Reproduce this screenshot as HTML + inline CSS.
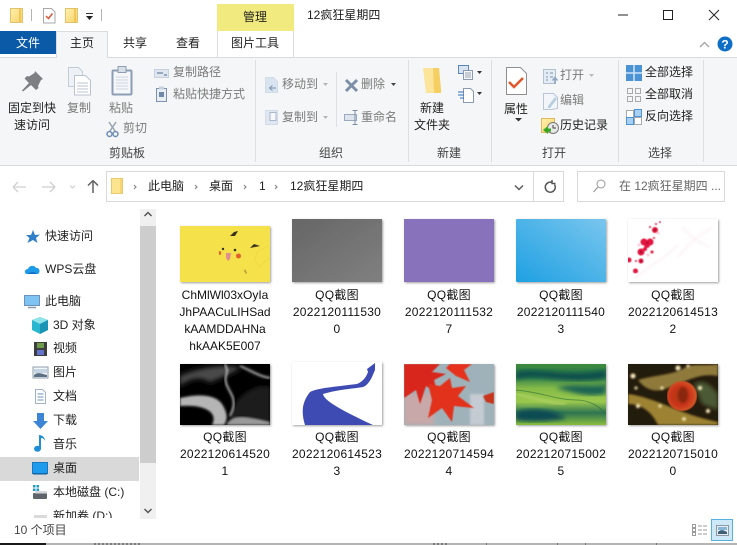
<!DOCTYPE html>
<html lang="zh-CN">
<head>
<meta charset="utf-8">
<title>12疯狂星期四</title>
<style>
html,body{margin:0;padding:0;background:#fff}
body{width:737px;height:545px;position:relative;overflow:hidden;font-family:"Liberation Sans","Noto Sans CJK SC",sans-serif;font-size:12px;color:#222}
svg.g{position:absolute;left:0;top:0}
.t{position:absolute;white-space:nowrap;line-height:16px;height:16px}
.d{color:#7b7b7b}
.c{position:absolute;width:112px;text-align:center;line-height:17px;color:#111;letter-spacing:.25px;word-break:break-all}
.clip{position:absolute;left:0;top:500px;width:139px;height:18px;overflow:hidden}
</style>
</head>
<body>
<svg class="g" width="737" height="545" viewBox="0 0 737 545" xmlns="http://www.w3.org/2000/svg">
<defs>
<linearGradient id="fo" x1="0" y1="0" x2="1" y2="1"><stop offset="0" stop-color="#fff0b0"/><stop offset="1" stop-color="#f7d266"/></linearGradient>
<linearGradient id="gray" x1="0" y1="0" x2="1" y2="1"><stop offset="0" stop-color="#666"/><stop offset="1" stop-color="#808080"/></linearGradient>
<linearGradient id="blue" x1="0" y1="1" x2="1" y2="0"><stop offset="0" stop-color="#1fa0e2"/><stop offset="1" stop-color="#79c6ee"/></linearGradient>
<linearGradient id="green" x1="0" y1="0" x2="0" y2="1"><stop offset="0" stop-color="#3d8a3c"/><stop offset=".2" stop-color="#2a7a4c"/><stop offset=".4" stop-color="#86bb48"/><stop offset=".62" stop-color="#9ac84e"/><stop offset=".8" stop-color="#2d7352"/><stop offset="1" stop-color="#8abd3e"/></linearGradient>
<radialGradient id="orn" cx=".45" cy=".5" r=".6"><stop offset="0" stop-color="#a83415"/><stop offset=".55" stop-color="#c9341a"/><stop offset="1" stop-color="#d9652c"/></radialGradient>
<filter id="sh" x="-5%" y="-5%" width="112%" height="112%"><feDropShadow dx="1" dy="1" stdDeviation="1" flood-color="#000" flood-opacity=".38"/></filter>
<filter id="s" x="0" y="0" width="100%" height="100%"><feGaussianBlur stdDeviation=".45"/></filter>
<filter id="b1"><feGaussianBlur stdDeviation="1"/></filter>
<filter id="b2"><feGaussianBlur stdDeviation="2.2"/></filter>
<clipPath id="c63"><rect width="90" height="63"/></clipPath>
<clipPath id="c61"><rect width="90" height="61"/></clipPath>
</defs>

<!-- title bar -->
<rect x="217" y="4" width="77" height="27" fill="#f1ea7f"/>
<path d="M217.500 31V57M293.500 31V57" stroke="#dcdcdc" fill="none"/>
<path d="M10.500 8.500h12v14h-12z" fill="url(#fo)" stroke="#e3c26a"/><path d="M20 9v13" stroke="#eec65c" stroke-width="2"/>
<path d="M31.500 9v12M101.500 9v12" stroke="#b5b5b5"/>
<path d="M43.500 8.500h8l3.500 3.500v11h-11.500z" fill="#fff" stroke="#a9a9a9"/><path d="M46 16l2.500 2.500 4-5" stroke="#d9583a" stroke-width="1.500" fill="none"/>
<path d="M65.500 8.500h12v14h-12z" fill="url(#fo)" stroke="#e3c26a"/><path d="M75 9v13" stroke="#eec65c" stroke-width="2"/>
<path d="M86 13.500h7" stroke="#333"/><path d="M86 16h7l-3.500 4z" fill="#222"/>
<path d="M618 15h10" stroke="#222" stroke-width="1"/>
<rect x="663.500" y="10.500" width="9" height="9" fill="none" stroke="#222"/>
<path d="M709 10l10 10M719 10l-10 10" stroke="#222"/>
<path d="M700 47l4.500-4.500 4.500 4.500" fill="none" stroke="#aaa" stroke-width="1.500"/>
<circle cx="725" cy="44" r="7.500" fill="#0f6fc6"/>
<text x="725" y="48.500" text-anchor="middle" font-family="Liberation Sans" font-weight="bold" font-size="12" fill="#fff">?</text>

<!-- tabs and ribbon -->
<rect x="0" y="31" width="56" height="23" fill="#0a5aa8"/>
<rect x="0" y="58" width="737" height="107" fill="#f5f6f7"/>
<path d="M0 57.500H737" stroke="#dadbdc"/><path d="M0 165.500H737" stroke="#dadbdc"/>
<path d="M56.500 58V31.500H107.500V58" fill="#f5f6f7" stroke="#dadbdc"/>
<rect x="57" y="56" width="50" height="3" fill="#f5f6f7"/>
<path d="M255.500 60v102M408.500 60v102M491.500 60v102M618.500 60v102M703.500 60v102" stroke="#dcdedf"/>
<path d="M336.500 72v55" stroke="#dcdedf"/>

<!-- pin -->
<path d="M35 71L43 79L41 80L38 86L38.500 88L36 90L31 85L23 91.500L22 90.500L29 83L24.500 78.500L27 76L29 76.500L34.500 73z" fill="#7d7f82"/>
<!-- copy -->
<path d="M68.500 67.500h10l4 4v15h-14z" fill="#eef2f7" stroke="#c3cbd6"/>
<path d="M74.500 75.500h11l5 5v14.500h-16z" fill="#fff" stroke="#b9c3d0"/>
<path d="M77 83h11M77 86h11M77 89h11M77 92h11" stroke="#b8c4d2"/>
<!-- paste -->
<rect x="112.500" y="70.500" width="19" height="24" rx="1" fill="#f4f6f9" stroke="#8d9eb4" stroke-width="2"/>
<rect x="118" y="66.500" width="8" height="6" fill="#d8dee6" stroke="#8d9eb4"/>
<path d="M116 77h12M116 80h12M116 83h12M116 86h12M116 89h12" stroke="#ccd5df"/>
<!-- scissors -->
<path d="M116 122l-6 9M109 122l6 9" stroke="#9aa4b1" stroke-width="1.500" fill="none"/>
<circle cx="109.500" cy="134" r="2.500" fill="none" stroke="#6f8eb3" stroke-width="1.500"/><circle cx="115.500" cy="134" r="2.500" fill="none" stroke="#6f8eb3" stroke-width="1.500"/>
<!-- path / shortcut icons -->
<rect x="154.500" y="69.500" width="14" height="8" fill="#dfe6f0" stroke="#c7d1de"/><path d="M157 73h6M164 75h3" stroke="#7f93ad" stroke-width="1.500"/>
<rect x="156.500" y="88.500" width="10" height="13" fill="#e9eef4" stroke="#7f93ad"/><rect x="159" y="86.500" width="5" height="3" fill="#c7d1de"/><path d="M159 92h5v5h-5z" fill="#6f88a8"/>
<!-- move to / copy to -->
<path d="M265.500 77.500h8l4 4v11h-12z" fill="#d9e4f1" stroke="#d2dbe6"/><path d="M276 88h-6m2.500-2.500l-3 2.500 3 2.500" stroke="#7f93ad" fill="none"/>
<rect x="265.500" y="110.500" width="12" height="14" fill="#dee7f2" stroke="#d2dbe6"/><rect x="270" y="112.500" width="6" height="8" fill="#f6f8fb" stroke="#a8b7c9"/>
<path d="M323 83l2.500 3 2.500-3z" fill="#b5b5b5"/><path d="M323 116l2.500 3 2.500-3z" fill="#b5b5b5"/>
<!-- delete, rename -->
<path d="M346 80l11 11M357 80l-11 11" stroke="#7d8fa6" stroke-width="3"/>
<path d="M391 83l2.500 3 2.500-3z" fill="#444"/>
<rect x="344.500" y="114.500" width="12" height="6" fill="#dde4ee" stroke="#9aa9bc"/><path d="M355 110.500v14M352.500 110.500h5M352.500 124.500h5" stroke="#7d8fa6"/>
<!-- new folder -->
<path d="M423 68H439L441 90V93H426z" fill="#fce49a"/><path d="M433 68H439L441 90V93H434z" fill="#f6cf62"/>
<!-- new item small -->
<rect x="458.500" y="65.500" width="10" height="8" fill="#d9e4f1" stroke="#5b86b8"/><rect x="463.500" y="70.500" width="9" height="9" fill="#f4f6f8" stroke="#8c9ab0"/><path d="M465 73h6M465 75h6M465 77h6" stroke="#9aa6b5"/>
<path d="M477 71h5l-2.500 3z" fill="#333"/>
<path d="M463.500 88.500h7l3 3v11h-10z" fill="#fff" stroke="#8c9ab0"/><path d="M458 92h6M458 95h6M460 98h4" stroke="#2c6fc0"/>
<path d="M477 92h5l-2.500 3z" fill="#333"/>
<!-- properties -->
<path d="M506.500 67.500h14l6 6v21h-20z" fill="#fff" stroke="#8f8f8f"/><path d="M509 82l5 5 9-9" fill="none" stroke="#e2562b" stroke-width="2.500"/>
<path d="M515 118h7l-3.500 3.500z" fill="#333"/>
<!-- open, edit, history -->
<rect x="543.500" y="69.500" width="12" height="14" fill="#e3ebf4" stroke="#b4c0ce"/><path d="M546 73h2M546 77h2M546 80h2M550 73h3M550 77h3" stroke="#7f93ad"/><path d="M555 84v-6m-2.500 2.500l2.500-3 2.500 3" stroke="#8ea5bf" stroke-width="1.500" fill="none"/>
<path d="M589 74h5l-2.500 3z" fill="#bcbcbc"/>
<path d="M543.500 93.500h10l4 4v11l-6 1h-8z" fill="#f2f6fa" stroke="#b9c6d5"/><path d="M548 106l7-9 2 2-7 9h-2z" fill="#b9cde3"/>
<path d="M541.500 118.500h13v14h-13z" fill="url(#fo)" stroke="#ddbb5c"/><circle cx="553" cy="128" r="5.500" fill="#e8e8e8" stroke="#777"/><path d="M553 125v3h3" stroke="#444" fill="none"/><path d="M543 130l5-4v2.500h3v3h-3v2.500z" fill="#36a626"/>
<!-- select -->
<g fill="#4c93d6"><rect x="626" y="65" width="16" height="16"/></g><path d="M634 65v16M626 73h16" stroke="#cfe3f6" stroke-width="1.500"/>
<g fill="none" stroke="#a9a9a9"><rect x="627.500" y="88.500" width="5" height="5"/><rect x="635.500" y="88.500" width="5" height="5"/><rect x="627.500" y="96.500" width="5" height="5"/><rect x="635.500" y="96.500" width="5" height="5"/></g>
<g stroke="#4c93d6" fill="#a9d0f2"><rect x="626.500" y="110.500" width="7" height="7" fill="#fff" stroke="#a9a9a9"/><rect x="634.500" y="109.500" width="7" height="7"/><rect x="626.500" y="117.500" width="7" height="7"/><rect x="634.500" y="117.500" width="7" height="7" fill="#fff" stroke="#a9a9a9"/></g>

<!-- address row -->
<path d="M13 187h13M13 187l5-5M13 187l5 5" stroke="#cfcfcf" fill="none" stroke-width="1.300"/>
<path d="M55 187H42M55 187l-5-5M55 187l-5 5" stroke="#cfcfcf" fill="none" stroke-width="1.300"/>
<path d="M70 185.500l2.500 2.500 2.500-2.500" stroke="#ccc" fill="none"/>
<path d="M93 193v-12M93 180.500l-5 5M93 180.500l5 5" stroke="#616161" fill="none" stroke-width="1.500"/>
<rect x="106.500" y="171.500" width="457" height="30" fill="#fff" stroke="#d9d9d9"/>
<path d="M533.500 172v29" stroke="#d9d9d9"/>
<path d="M111.500 178.500h11v15h-11z" fill="#fde48f" stroke="#e9c96f"/><path d="M121 179v14" stroke="#f0c757"/>
<g fill="none" stroke="#8a8a8a" stroke-width="1.200"><path d="M134 185l2 2-2 2"/><path d="M195 185l2 2-2 2"/><path d="M244 185l2 2-2 2"/><path d="M275 185l2 2-2 2"/></g>
<path d="M515 185.500l4 4 4-4" stroke="#5b5b5b" fill="none" stroke-width="1.500"/>
<path d="M554.500 184.500a5 5 0 1 1-2-1.800M552 180v3.500h3.500" stroke="#555" fill="none" stroke-width="1.500"/>
<rect x="577.500" y="171.500" width="147" height="30" fill="#fff" stroke="#d9d9d9"/>
<circle cx="601" cy="184" r="4" fill="none" stroke="#9a9a9a"/><path d="M598 187l-4.500 5" stroke="#9a9a9a" stroke-width="1.200"/>

<!-- nav pane -->
<rect x="0" y="457" width="139" height="24" fill="#d9d9d9"/>
<rect x="140" y="209" width="16" height="310" fill="#f0f0f0"/>
<rect x="140" y="226" width="16" height="237" fill="#cdcdcd"/>
<path d="M144.500 216l3.500-3.500 3.500 3.500" fill="none" stroke="#555" stroke-width="1.500"/>
<path d="M144.500 509l3.500 3.500 3.500-3.500" fill="none" stroke="#555" stroke-width="1.500"/>
<path d="M33 230l2 5 5-.5-4 3.500 1.500 5-4.500-3-5.500 3 2-5-3.500-3 5 0z" fill="#2f7fc9"/>
<path d="M27 274c-3 0-3-5 1-5 1-4 7-4 8-1 4-1 5 6 1 6z" fill="#1d9be6"/><path d="M27 274c3-2 8-3 10 0z" fill="#0f6fc6"/>
<rect x="24.500" y="295.500" width="15" height="10" fill="#7ec3f1" stroke="#6b92b8"/><path d="M28 307.500h8" stroke="#8c9cae" stroke-width="1.500"/>
<path d="M40 317l8 3v10l-8 4-8-4v-10z" fill="#29b7cf"/><path d="M32 320l8 4 8-4-8-3z" fill="#8fe3ea"/><path d="M40 324v10l8-4v-10z" fill="#1a95b5"/>
<rect x="34" y="342" width="13" height="14" fill="#3d3d3d"/><rect x="37" y="343" width="7" height="5" fill="#6c9c4a"/><rect x="37" y="350" width="7" height="5" fill="#6474cc"/>
<rect x="33" y="367" width="15" height="11" fill="#f4f6f8" stroke="#8f9cab"/><path d="M34 375c3-3 6-2 13 0v2H34z" fill="#5c7183"/><path d="M34 369h13v4H34z" fill="#c5d5e3"/>
<path d="M35.500 389.500h7l3 3v11h-10z" fill="#fff" stroke="#9fb2c6"/><path d="M37.500 394h6M37.500 397h6M37.500 400h6" stroke="#6e94bb"/>
<path d="M37 413h7v8h4l-7.500 8-7.500-8h4z" fill="#3b84d6"/>
<path d="M41 435v14a3.500 3 0 1 1-2-3v-11c3 0 6 2 6 6-1-2-2-3-4-3z" fill="#1f8fd8"/>
<rect x="32.500" y="462.500" width="15" height="11" fill="#1f9bee" stroke="#1878bf"/><path d="M33 474h14" stroke="#0d5a96"/>
<g fill="#1f9bc9"><rect x="33" y="485" width="2.500" height="2.500"/><rect x="36.500" y="485" width="2.500" height="2.500"/><rect x="33" y="488.500" width="2.500" height="2.500"/><rect x="36.500" y="488.500" width="2.500" height="2.500"/></g>
<rect x="33" y="493" width="14" height="6" rx="1" fill="#5e6469"/><rect x="35" y="491" width="12" height="2.500" fill="#d5d8da"/>
<rect x="34" y="515" width="13" height="3" fill="#d9dadb"/>

<!-- view buttons -->
<g fill="none" stroke="#9b9b9b"><rect x="692.500" y="524.500" width="3" height="3"/><rect x="692.500" y="528.500" width="3" height="3"/><rect x="692.500" y="532.500" width="3" height="3"/></g>
<path d="M698 526h10M698 530h10M698 534h10" stroke="#9b9b9b" stroke-dasharray="4 1"/>
<rect x="711.500" y="519.500" width="21" height="21" fill="#cde8f7" stroke="#58b0e0"/>
<rect x="716.500" y="525.500" width="12" height="10" fill="#e6eef4" stroke="#8c99a6"/><path d="M718 532c3-3 5-2 9 0v2h-9z" fill="#3f5e78"/><path d="M718 527h9v3h-9z" fill="#88b8d8"/>

<!-- bottom strip -->
<rect x="0" y="543" width="737" height="2" fill="#b4b4b4"/>
<rect x="0" y="543" width="46" height="2" fill="#1a1a1a"/>
<path d="M94 544h47M433 544h15" stroke="#444" stroke-width="1" stroke-dasharray="2 2"/>
<path d="M486.500 543v2M557.500 543v2M585.500 543v2M656.500 543v2" stroke="#777"/>

<!-- row 1 thumbs -->
<g transform="translate(180 226)" filter="url(#sh)">
  <rect width="90" height="56" fill="#f5e14a"/>
  <path d="M50 10l4-4 4-1-3 5z M70 22l4-4 6 2-5 1z" fill="#3a3320"/>
  <circle cx="43" cy="23" r="1.200" fill="#333"/><circle cx="55" cy="24" r="1.300" fill="#333"/>
  <ellipse cx="40" cy="27" rx="1.200" ry="2" fill="#de6b2e"/><circle cx="58.500" cy="30" r="2.500" fill="#e2602c"/>
  <path d="M46 27h5l-1 6-2 2-2-3z" fill="#e08f8f"/>
  <path d="M65 43l2 4-1 1-2-3z" fill="#b79a3c"/>
  <path d="M90 19L77 26l-2 8 4 7 11-10" fill="none" stroke="#f1da45"/>
</g>
<g transform="translate(292 219)" filter="url(#sh)"><rect width="90" height="63" fill="url(#gray)"/></g>
<g transform="translate(404 219)" filter="url(#sh)"><rect width="90" height="63" fill="#8872bc"/></g>
<g transform="translate(516 219)" filter="url(#sh)"><rect width="90" height="63" rx="1" fill="url(#blue)"/></g>
<g transform="translate(628 219)" filter="url(#sh)">
  <rect width="90" height="63" fill="#fff"/>
  <g clip-path="url(#c63)">
  <path d="M50 38C62 24 70 16 84 9M54 8c8 8 16 16 28 20M6 60C20 48 36 40 50 26" stroke="#fdf3f6" stroke-width="2" fill="none" filter="url(#b1)"/>
  <g filter="url(#s)">
  <g fill="#e3173f">
  <circle cx="16" cy="23" r="3.500"/><circle cx="22" cy="23" r="3.500"/><circle cx="19" cy="26" r="3"/><circle cx="13" cy="33" r="3.500"/><circle cx="17" cy="30" r="2"/><circle cx="13" cy="42" r="2.500"/><circle cx="7.500" cy="52" r="2.500"/><circle cx="27" cy="11" r="3"/><circle cx="1" cy="41" r="2.500"/><circle cx="24" cy="33" r="1.500"/><circle cx="28" cy="5" r="1"/><circle cx="32" cy="3" r="1"/><circle cx="22" cy="8" r="1"/><circle cx="8" cy="42" r="1"/><circle cx="26" cy="19" r="1"/>
  </g>
  <g fill="#f8b4c6" opacity=".7"><circle cx="30" cy="14" r="1.500"/><circle cx="11" cy="26" r="1.500"/><circle cx="20" cy="36" r="1.500"/></g>
  <g fill="#8d0e2c"><circle cx="19" cy="24" r="1"/><circle cx="13" cy="33" r="1"/><circle cx="27" cy="11" r="1"/><circle cx="13" cy="42" r=".9"/></g>
  </g>
  </g>
</g>

<!-- row 2 thumbs -->
<g transform="translate(180 364)" filter="url(#sh)">
  <rect width="90" height="61" fill="#050505"/>
  <g clip-path="url(#c61)">
  <path d="M0 12C20 4 40 0 60 4 50 10 40 14 30 18 20 12 10 14 0 22z" fill="#4a4a4a" filter="url(#b2)"/>
  <path d="M0 34C18 30 35 30 42 40 48 50 48 56 44 61H32C38 50 28 40 0 42z" fill="#b5b5b5" filter="url(#b1)"/>
  <path d="M48 61C50 46 56 34 72 26 80 22 86 22 90 24V61z" fill="#1e1e1e" filter="url(#b2)"/>
  <path d="M46 61C52 52 58 50 90 58V61z" fill="#9a9a9a" filter="url(#b1)"/>
  <path d="M45 0C47 6 48 6 46 12 44 20 50 26 53 34 55 42 52 48 50 52" stroke="#ddd" stroke-width="1.500" fill="none" filter="url(#b1)"/>
  <path d="M60 2C70 6 78 12 90 14" stroke="#aaa" stroke-width="2" fill="none" filter="url(#b1)"/>
  </g>
</g>
<g transform="translate(292 362)" filter="url(#sh)">
  <rect width="90" height="63" fill="#fff"/>
  <path d="M13 63C9 50 10 40 18 30 26 26 41 25 65 22 70 20 74 16 76 10L75 7 83 1V8L80 15C77 21 74 24 71 25 60 27 48 27 31 32 32 37 40 44 81 63z" fill="#3e4bb2"/>
</g>
<g transform="translate(404 364)" filter="url(#sh)">
  <rect width="90" height="61" fill="#9fb2ba"/>
  <g clip-path="url(#c61)">
  <rect x="0" y="30" width="30" height="31" fill="#c8a8a8" filter="url(#b2)"/>
  <rect x="66" y="30" width="14" height="31" fill="#c4cbd2" filter="url(#b1)"/>
  <g filter="url(#s)">
  <g fill="#d9261c">
  <path d="M0 0H36L28 8 42 10 30 16 34 30 22 22 16 40 12 26 0 34z"/>
  <path d="M46 0H68L60 6 66 18 52 12 42 4z" fill="#e6331f"/>
  <path d="M24 20L36 22 46 14 48 24 62 22 54 32 70 44 50 42 48 58 38 44 24 54 28 36z" fill="#e2301a"/>
  <path d="M79 32L90 28V40L82 38z" fill="#c9361d"/>
  </g>
  </g>
  </g>
</g>
<g transform="translate(516 364)" filter="url(#sh)">
  <rect width="90" height="61" fill="url(#green)"/>
  <g clip-path="url(#c61)">
  <path d="M0 8C20 2 45 14 90 6V14C50 22 20 8 0 16z" fill="#0f4f4e" filter="url(#b2)"/>
  <path d="M40 24C60 18 75 24 90 20V30C70 34 55 28 40 24z" fill="#1a6552" filter="url(#b2)"/>
  <path d="M0 26C25 28 40 36 60 36 75 36 85 44 90 50" stroke="#2a6d3a" stroke-width="1" fill="none" opacity=".6"/>
  <path d="M0 30C20 34 35 40 50 40" stroke="#b8d56a" stroke-width="3" fill="none" opacity=".6" filter="url(#b1)"/>
  <path d="M0 48C15 42 40 46 50 54 35 58 10 58 0 56z" fill="#0d4b52" filter="url(#b2)"/>
  </g>
</g>
<g transform="translate(628 364)" filter="url(#sh)">
  <rect width="90" height="61" fill="#241a0c"/>
  <g clip-path="url(#c61)">
  <path d="M10 16C30 10 44 12 60 2 70 0 80 2 90 0V12C70 8 54 20 34 26 24 28 16 24 10 16z" fill="#8f7a3a" filter="url(#b1)"/>
  <path d="M0 30C30 34 50 50 90 58V61H30C25 50 15 40 0 40z" fill="#9c8232" filter="url(#b1)"/>
  <path d="M66 20C76 14 84 22 90 30V46L74 40z" fill="#4b5a34" filter="url(#b2)"/>
  <circle cx="54" cy="32" r="15" fill="url(#orn)" filter="url(#s)"/>
  <ellipse cx="55" cy="31" rx="5" ry="8" fill="#8a2810" filter="url(#b1)"/>
  <g fill="#fff3c2" filter="url(#b1)">
  <circle cx="5" cy="12" r="2.500"/><circle cx="50" cy="4" r="2.500"/><circle cx="60" cy="2" r="1.500"/><circle cx="8" cy="24" r="1.500"/><circle cx="72" cy="24" r="2"/><circle cx="10" cy="42" r="2"/><circle cx="32" cy="42" r="1.500"/><circle cx="56" cy="55" r="1.800"/><circle cx="80" cy="47" r="2"/><circle cx="34" cy="24" r="1.500"/>
  </g>
  </g>
</g>
</svg>

<div class="t" style="left:243px;top:9px">管理</div>
<div class="t" style="left:307px;top:7px">12疯狂星期四</div>
<div class="t" style="left:16px;top:35px;color:#fff">文件</div>
<div class="t" style="left:70px;top:35px">主页</div>
<div class="t" style="left:123px;top:35px">共享</div>
<div class="t" style="left:176px;top:35px">查看</div>
<div class="t" style="left:231px;top:35px">图片工具</div>

<div class="t" style="left:8px;top:100px">固定到快</div>
<div class="t" style="left:14px;top:117px">速访问</div>
<div class="t d" style="left:67px;top:100px">复制</div>
<div class="t d" style="left:109px;top:100px">粘贴</div>
<div class="t d" style="left:123px;top:120px">剪切</div>
<div class="t d" style="left:173px;top:64px">复制路径</div>
<div class="t d" style="left:173px;top:86px">粘贴快捷方式</div>
<div class="t" style="left:109px;top:145px;color:#444">剪贴板</div>
<div class="t d" style="left:282px;top:76px">移动到</div>
<div class="t d" style="left:282px;top:109px">复制到</div>
<div class="t" style="left:319px;top:145px;color:#444">组织</div>
<div class="t d" style="left:361px;top:76px">删除</div>
<div class="t d" style="left:361px;top:109px">重命名</div>
<div class="t" style="left:420px;top:100px">新建</div>
<div class="t" style="left:414px;top:117px">文件夹</div>
<div class="t" style="left:437px;top:145px;color:#444">新建</div>
<div class="t" style="left:504px;top:101px">属性</div>
<div class="t d" style="left:560px;top:67px">打开</div>
<div class="t d" style="left:560px;top:92px">编辑</div>
<div class="t" style="left:560px;top:117px">历史记录</div>
<div class="t" style="left:542px;top:145px;color:#444">打开</div>
<div class="t" style="left:645px;top:64px">全部选择</div>
<div class="t" style="left:645px;top:86px">全部取消</div>
<div class="t" style="left:645px;top:108px">反向选择</div>
<div class="t" style="left:648px;top:145px;color:#444">选择</div>

<div class="t" style="left:148px;top:178px">此电脑</div>
<div class="t" style="left:209px;top:178px">桌面</div>
<div class="t" style="left:259px;top:178px">1</div>
<div class="t" style="left:290px;top:178px">12疯狂星期四</div>
<div class="t" style="left:619px;top:178px;color:#666">在 12疯狂星期四 ...</div>

<div class="t" style="left:45px;top:228px">快速访问</div>
<div class="t" style="left:45px;top:261px">WPS云盘</div>
<div class="t" style="left:45px;top:293px">此电脑</div>
<div class="t" style="left:53px;top:317px">3D 对象</div>
<div class="t" style="left:53px;top:340px">视频</div>
<div class="t" style="left:53px;top:364px">图片</div>
<div class="t" style="left:53px;top:388px">文档</div>
<div class="t" style="left:53px;top:412px">下载</div>
<div class="t" style="left:53px;top:436px">音乐</div>
<div class="t" style="left:53px;top:460px">桌面</div>
<div class="t" style="left:53px;top:484px">本地磁盘 (C:)</div>
<div class="clip"><div class="t" style="left:53px;top:8px">新加卷 (D:)</div></div>
<div class="t" style="left:14px;top:522px;color:#444">10 个项目</div>

<div class="c" style="left:169px;top:287px;letter-spacing:0">ChMlWl03xOyIa<br>JhPAACuLIHSad<br>kAAMDDAHNa<br>hkAAK5E007</div>
<div class="c" style="left:281px;top:287px">QQ截图<br>2022120111530<br>0</div>
<div class="c" style="left:393px;top:287px">QQ截图<br>2022120111532<br>7</div>
<div class="c" style="left:505px;top:287px">QQ截图<br>2022120111540<br>3</div>
<div class="c" style="left:617px;top:287px">QQ截图<br>2022120614513<br>2</div>
<div class="c" style="left:169px;top:429px">QQ截图<br>2022120614520<br>1</div>
<div class="c" style="left:281px;top:429px">QQ截图<br>2022120614523<br>3</div>
<div class="c" style="left:393px;top:429px">QQ截图<br>2022120714594<br>4</div>
<div class="c" style="left:505px;top:429px">QQ截图<br>2022120715002<br>5</div>
<div class="c" style="left:617px;top:429px">QQ截图<br>2022120715010<br>0</div>
</body>
</html>
